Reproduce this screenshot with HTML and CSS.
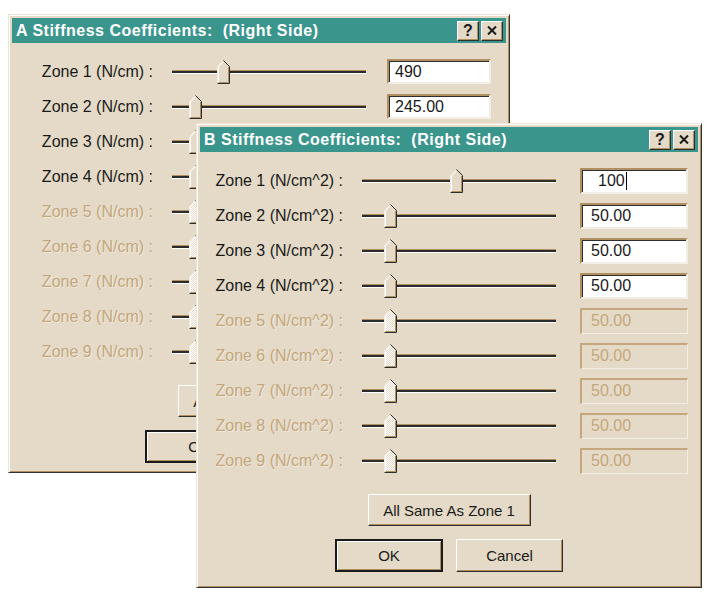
FILE: index.html
```html
<!DOCTYPE html>
<html lang="en">
<head>
    <meta charset="UTF-8">
    <meta name="viewport" content="width=device-width, initial-scale=1.0">
    <title>Stiffness Coefficients</title>
    <link rel="stylesheet" href="styles.css">
</head>
<body>
    <svg class="defs" width="0" height="0">
        <defs>
            <pattern id="dither" width="2" height="2" patternUnits="userSpaceOnUse">
                <rect width="2" height="2" fill="#e4dac7"/>
                <rect width="1" height="1" fill="#ffffff"/>
                <rect x="1" y="1" width="1" height="1" fill="#ffffff"/>
            </pattern>
            <symbol id="thumb" viewBox="0 0 13 24">
                <path d="M0.5 6.5 L6.5 0.5 L12.5 6.5 V23.5 H0.5 Z" fill="#e4dac7"/>
                <path d="M0.5 23.5 V6.5 L6.5 0.5" stroke="#f1ebe0" fill="none"/>
                <path d="M1.5 22.5 V6.9 L6.5 1.9" stroke="#ffffff" fill="none"/>
                <path d="M6.5 0.5 L12.5 6.5 V23.5 H0.5" stroke="#2e2e2e" fill="none"/>
                <path d="M11.5 7 V22.5 H1.5" stroke="#b09060" fill="none"/>
            </symbol>
            <symbol id="thumb-off" viewBox="0 0 13 24">
                <path d="M0.5 6.5 L6.5 0.5 L12.5 6.5 V23.5 H0.5 Z" fill="url(#dither)"/>
                <path d="M0.5 23.5 V6.5 L6.5 0.5" stroke="#f1ebe0" fill="none"/>
                <path d="M1.5 22.5 V6.9 L6.5 1.9" stroke="#ffffff" fill="none"/>
                <path d="M6.5 0.5 L12.5 6.5 V23.5 H0.5" stroke="#2e2e2e" fill="none"/>
                <path d="M11.5 7 V22.5 H1.5" stroke="#b09060" fill="none"/>
            </symbol>
            <symbol id="close" viewBox="0 0 10 9">
                <path d="M1 0.5 L9 8.5 M9 0.5 L1 8.5" stroke="#1a1a1a" stroke-width="2" fill="none"/>
            </symbol>
        </defs>
    </svg>

    <!-- Window A (behind) -->
    <div class="window window-a">
        <div class="titlebar">
            <span class="title">A Stiffness Coefficients:&nbsp; (Right Side)</span>
            <div class="title-buttons">
                <span class="tbtn">?</span>
                <span class="tbtn"><svg class="close-icon"><use href="#close"/></svg></span>
            </div>
        </div>
        <div class="form">
            <div class="row">
                <span class="label">Zone 1 (N/cm) :</span>
                <div class="slider"><svg class="thumb" style="left:45px"><use href="#thumb"/></svg></div>
                <div class="field field-short">490</div>
            </div>
            <div class="row">
                <span class="label">Zone 2 (N/cm) :</span>
                <div class="slider"><svg class="thumb" style="left:17px"><use href="#thumb"/></svg></div>
                <div class="field field-short">245.00</div>
            </div>
            <div class="row">
                <span class="label">Zone 3 (N/cm) :</span>
                <div class="slider"><svg class="thumb" style="left:17px"><use href="#thumb"/></svg></div>
                <div class="field field-short">245.00</div>
            </div>
            <div class="row">
                <span class="label">Zone 4 (N/cm) :</span>
                <div class="slider"><svg class="thumb" style="left:17px"><use href="#thumb"/></svg></div>
                <div class="field field-short">245.00</div>
            </div>
            <div class="row disabled">
                <span class="label">Zone 5 (N/cm) :</span>
                <div class="slider"><svg class="thumb" style="left:17px"><use href="#thumb-off"/></svg></div>
                <div class="field">245.00</div>
            </div>
            <div class="row disabled">
                <span class="label">Zone 6 (N/cm) :</span>
                <div class="slider"><svg class="thumb" style="left:17px"><use href="#thumb-off"/></svg></div>
                <div class="field">245.00</div>
            </div>
            <div class="row disabled">
                <span class="label">Zone 7 (N/cm) :</span>
                <div class="slider"><svg class="thumb" style="left:17px"><use href="#thumb-off"/></svg></div>
                <div class="field">245.00</div>
            </div>
            <div class="row disabled">
                <span class="label">Zone 8 (N/cm) :</span>
                <div class="slider"><svg class="thumb" style="left:17px"><use href="#thumb-off"/></svg></div>
                <div class="field">245.00</div>
            </div>
            <div class="row disabled">
                <span class="label">Zone 9 (N/cm) :</span>
                <div class="slider"><svg class="thumb" style="left:17px"><use href="#thumb-off"/></svg></div>
                <div class="field">245.00</div>
            </div>
        </div>
        <div class="actions">
            <div class="btn btn-wide">All Same As Zone 1</div>
            <div class="btn-row">
                <div class="btn btn-default">OK</div>
                <div class="btn">Cancel</div>
            </div>
        </div>
    </div>

    <!-- Window B (front) -->
    <div class="window window-b">
        <div class="titlebar">
            <span class="title">B Stiffness Coefficients:&nbsp; (Right Side)</span>
            <div class="title-buttons">
                <span class="tbtn">?</span>
                <span class="tbtn"><svg class="close-icon"><use href="#close"/></svg></span>
            </div>
        </div>
        <div class="form">
            <div class="row">
                <span class="label">Zone 1 (N/cm^2) :</span>
                <div class="slider"><svg class="thumb" style="left:88px"><use href="#thumb"/></svg></div>
                <div class="field field-edit">100<span class="caret"></span></div>
            </div>
            <div class="row">
                <span class="label">Zone 2 (N/cm^2) :</span>
                <div class="slider"><svg class="thumb" style="left:22px"><use href="#thumb"/></svg></div>
                <div class="field">50.00</div>
            </div>
            <div class="row">
                <span class="label">Zone 3 (N/cm^2) :</span>
                <div class="slider"><svg class="thumb" style="left:22px"><use href="#thumb"/></svg></div>
                <div class="field">50.00</div>
            </div>
            <div class="row">
                <span class="label">Zone 4 (N/cm^2) :</span>
                <div class="slider"><svg class="thumb" style="left:22px"><use href="#thumb"/></svg></div>
                <div class="field">50.00</div>
            </div>
            <div class="row disabled">
                <span class="label">Zone 5 (N/cm^2) :</span>
                <div class="slider"><svg class="thumb" style="left:22px"><use href="#thumb-off"/></svg></div>
                <div class="field">50.00</div>
            </div>
            <div class="row disabled">
                <span class="label">Zone 6 (N/cm^2) :</span>
                <div class="slider"><svg class="thumb" style="left:22px"><use href="#thumb-off"/></svg></div>
                <div class="field">50.00</div>
            </div>
            <div class="row disabled">
                <span class="label">Zone 7 (N/cm^2) :</span>
                <div class="slider"><svg class="thumb" style="left:22px"><use href="#thumb-off"/></svg></div>
                <div class="field">50.00</div>
            </div>
            <div class="row disabled">
                <span class="label">Zone 8 (N/cm^2) :</span>
                <div class="slider"><svg class="thumb" style="left:22px"><use href="#thumb-off"/></svg></div>
                <div class="field">50.00</div>
            </div>
            <div class="row disabled">
                <span class="label">Zone 9 (N/cm^2) :</span>
                <div class="slider"><svg class="thumb" style="left:22px"><use href="#thumb-off"/></svg></div>
                <div class="field">50.00</div>
            </div>
        </div>
        <div class="actions">
            <div class="btn btn-wide">All Same As Zone 1</div>
            <div class="btn-row">
                <div class="btn btn-default">OK</div>
                <div class="btn">Cancel</div>
            </div>
        </div>
    </div>
</body>
</html>
```

FILE: styles.css
```css
body {
    margin: 0;
    background-color: #ffffff;
    font-family: 'Liberation Sans', Arial, sans-serif;
    font-size: 15px;
    color: #1a1a1a;
}
.defs {
    position: absolute;
}
.window {
    position: absolute;
    box-sizing: border-box;
    display: flex;
    flex-direction: column;
    padding: 3px;
    background-color: #e4dac7;
    border: 1px solid;
    border-color: #ece4d6 #333333 #333333 #ece4d6;
    box-shadow: inset 1px 1px 0 #ffffff, inset -1px -1px 0 #b09060;
}
.window-a {
    left: 8px;
    top: 14px;
    width: 502px;
    height: 459px;
}
.window-b {
    left: 196px;
    top: 123px;
    width: 506px;
    height: 465px;
}
.titlebar {
    height: 25px;
    display: flex;
    align-items: center;
    padding-left: 4px;
    background-color: #3a958c;
    color: #ffffff;
}
.title {
    font-weight: bold;
    font-size: 16px;
    letter-spacing: 0.5px;
    white-space: nowrap;
}
.title-buttons {
    margin-left: auto;
    display: flex;
    gap: 2px;
    padding-right: 3px;
}
.tbtn {
    box-sizing: border-box;
    width: 22px;
    height: 20px;
    display: flex;
    align-items: center;
    justify-content: center;
    background-color: #e4dac7;
    color: #1a1a1a;
    font-weight: bold;
    font-size: 16px;
    border: 1px solid;
    border-color: #ffffff #2e2e2e #2e2e2e #ffffff;
    box-shadow: inset -1px -1px 0 #b09060;
}
.close-icon {
    width: 10px;
    height: 9px;
}
.form {
    padding-top: 11px;
}
.window-b .form {
    padding-left: 2px;
}
.row {
    height: 35px;
    display: grid;
    grid-template-columns: 160px 218px 108px;
    align-items: center;
    font-size: 16px;
}
.label {
    text-align: right;
    padding-right: 19px;
    white-space: nowrap;
}
.slider {
    position: relative;
    width: 194px;
    height: 24px;
}
.slider::before {
    content: "";
    position: absolute;
    left: 0;
    right: 0;
    top: 10px;
    height: 2px;
    background-color: #2b2b2b;
    border-top: 1px solid #b09060;
    border-bottom: 1px solid #ffffff;
}
.thumb {
    position: absolute;
    top: 0;
    width: 13px;
    height: 24px;
}
.field {
    box-sizing: border-box;
    height: 26px;
    display: flex;
    align-items: center;
    padding-left: 9px;
    background-color: #ffffff;
    border: 2px solid;
    border-color: #b09060 #f3eee5 #f3eee5 #b09060;
    box-shadow: inset 1px 1px 0 #2e2e2e;
}
.field-short {
    height: 25px;
    width: 104px;
    margin-left: -3px;
    padding-left: 6px;
}
.field-edit {
    padding-left: 16px;
}
.caret {
    display: inline-block;
    width: 1px;
    height: 18px;
    margin-left: 1px;
    background-color: #000000;
}
.disabled .label {
    color: #c4a77c;
    text-shadow: 1px 1px 0 rgba(255, 255, 255, 0.4);
}
.disabled .field {
    background-color: #e4dac7;
    color: #c4a77c;
    border-width: 2px 1px 1px 2px;
    border-color: #c4a77c #f3eee5 #f3eee5 #c4a77c;
    box-shadow: none;
    align-items: flex-start;
    padding-top: 2px;
}
.actions {
    display: flex;
    flex-direction: column;
    align-items: center;
    gap: 13px;
    margin-top: 16px;
    font-size: 15px;
}
.btn-row {
    display: flex;
    gap: 13px;
}
.btn {
    box-sizing: border-box;
    width: 107px;
    height: 33px;
    display: flex;
    align-items: center;
    justify-content: center;
    background-color: #e4dac7;
    border: 1px solid;
    border-color: #ffffff #2e2e2e #2e2e2e #ffffff;
    box-shadow: inset -1px -1px 0 #b09060;
}
.btn-wide {
    width: 163px;
    height: 32px;
}
.btn-default {
    width: 108px;
    border: 2px solid #1a1a1a;
    box-shadow: inset 1px 1px 0 #ffffff, inset -1px -1px 0 #b09060;
}
```
